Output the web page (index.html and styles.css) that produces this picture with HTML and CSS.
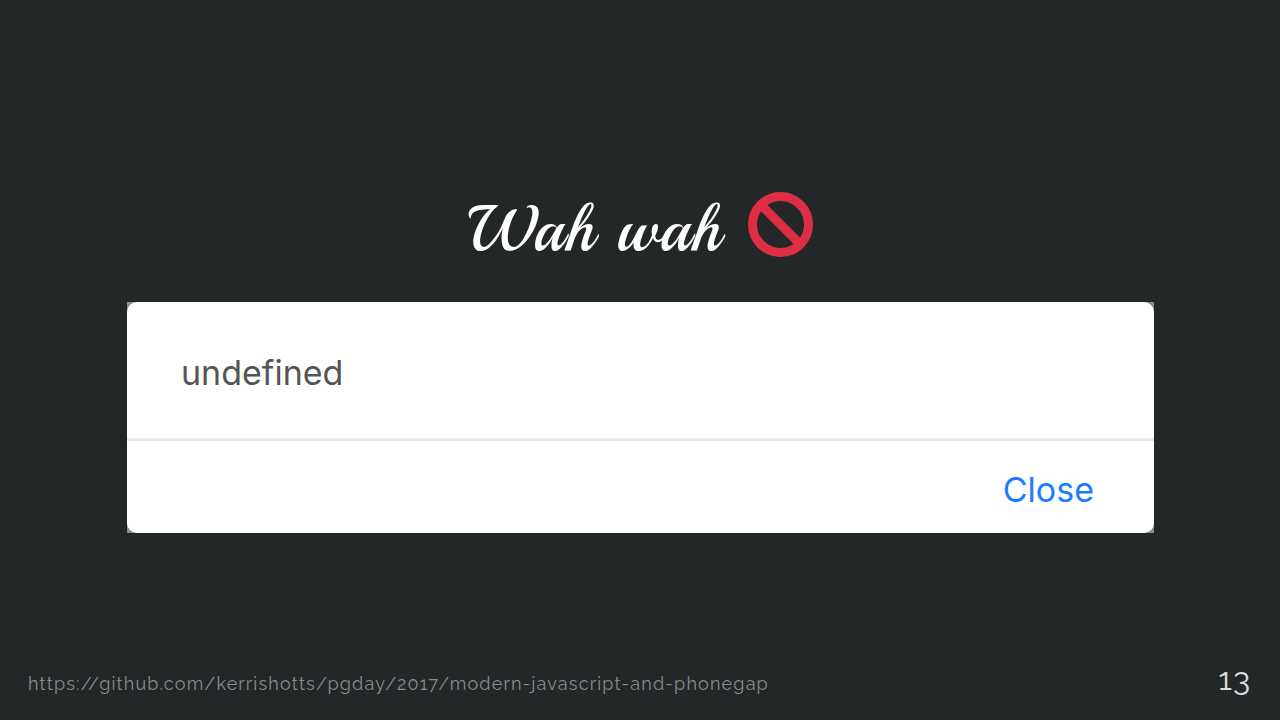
FILE: index.html
```html
<!DOCTYPE html>
<html lang="en">
<head>
<meta charset="utf-8">
<title>Wah wah</title>
<link rel="stylesheet" href="styles.css">
</head>
<body>
<main class="slide">
  <section class="content">
    <h1 class="title"><span>Wah wah</span>
      <svg class="prohibited" viewBox="0 0 65 65" aria-hidden="true"><circle cx="32.5" cy="32.5" r="28"/><path d="M13 13 52 52"/></svg>
    </h1>
    <div class="frame">
      <div class="dialog">
        <p class="message">undefined</p>
        <div class="actions"><button class="close" type="button">Close</button></div>
      </div>
    </div>
  </section>
  <footer class="footer">
    <a class="source" href="https://github.com/kerrishotts/pgday/2017/modern-javascript-and-phonegap">https://github.com/kerrishotts/pgday/2017/modern-javascript-and-phonegap</a>
    <span class="page">13</span>
  </footer>
</main>
</body>
</html>
```
FILE: styles.css
```css
* { box-sizing: border-box; }
body { margin: 0; background: #232728; color: #fff; }
.slide { min-height: 100vh; display: flex; flex-direction: column; }
.content { flex: 1; padding: 183px 126px 0 127px; }
.title {
  display: flex; justify-content: center; align-items: flex-end; gap: 26px;
  margin: 0 0 37px;
  font: 400 64px/72px "Playball", "Dancing Script", "Liberation Serif", serif;
  letter-spacing: 2px;
  height: 82px;
}
.prohibited { width: 65px; height: 65px; margin-bottom: 8px; fill: none; stroke: #dd2e44; stroke-width: 9; }
.frame { background: #8b8d8d; }
.dialog { background: #fff; border-radius: 10px; font-family: Inter, "Liberation Sans", sans-serif; }
.message { margin: 0; padding: 47px 54px 41px; font-size: 34px; line-height: 48px; color: #555; border-bottom: 3px solid #e7e7e7; }
.actions { display: flex; justify-content: flex-end; padding: 25px 60px 19px; }
.close { padding: 0; border: 0; background: none; font: 34px/48px Inter, "Liberation Sans", sans-serif; color: #1a7dff; cursor: pointer; }
.footer { display: flex; justify-content: space-between; align-items: flex-end; padding: 0 29px 16px 28px; font-family: Raleway, Lato, sans-serif; }
.source { font-size: 18px; line-height: 40px; letter-spacing: 0.065em; color: #898c8c; text-decoration: none; }
.page { font-size: 32px; line-height: 50px; letter-spacing: 1px; color: #d8dcdc; }
```
